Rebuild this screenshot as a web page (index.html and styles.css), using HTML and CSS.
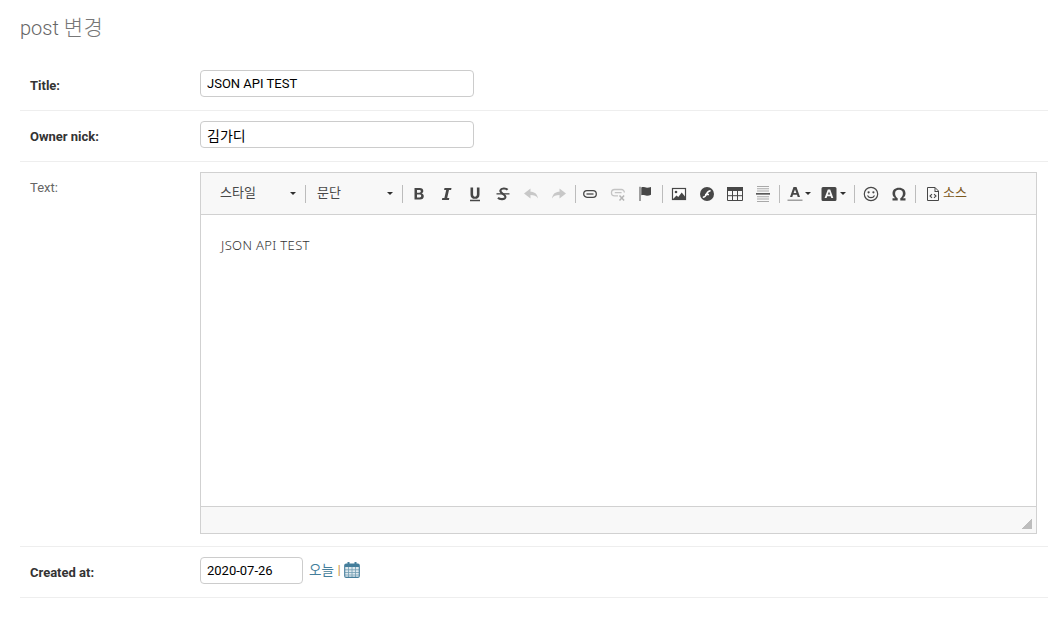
FILE: index.html
```html
<!DOCTYPE html>
<html lang="ko">
<head>
<meta charset="utf-8">
<title>post 변경</title>
<link rel="stylesheet" href="styles.css">
</head>
<body>
<main class="content">
  <h1 class="title">post <span class="title-ko">변경</span></h1>
  <form class="form">
    <div class="row">
      <label class="label required">Title:</label>
      <input class="input" type="text" value="JSON API TEST">
    </div>
    <div class="row">
      <label class="label required">Owner nick:</label>
      <input class="input input-ko" type="text" value="김가디">
    </div>
    <div class="row row-editor">
      <label class="label">Text:</label>
      <div class="editor">
        <div class="toolbar">
          <div class="combo combo-style"><span class="combo-label">스타일</span><i class="caret"></i></div>
          <span class="sep"></span>
          <div class="combo combo-format"><span class="combo-label">문단</span><i class="caret"></i></div>
          <span class="sep"></span>
          <div class="group">
            <span class="btn"><svg width="16" height="16" viewBox="0 0 16 16"><path fill="#474747" fill-rule="evenodd" d="M3.500 2h5.200c2.300 0 3.600 1 3.600 3 0 1.200-.7 2-1.700 2.400 1.400.3 2.200 1.300 2.200 2.800 0 2-1.400 3.300-3.800 3.300H3.500V2zm2.500 2v2.700h2.300c1 0 1.500-.4 1.500-1.400 0-.9-.5-1.300-1.500-1.300H6zm0 4.600v2.900h2.600c1.100 0 1.600-.5 1.600-1.400 0-1-.6-1.500-1.600-1.500H6z"/></svg></span>
            <span class="btn"><svg width="16" height="16" viewBox="0 0 16 16"><path fill="#474747" d="M5.500 2h7l-.4 1.900h-2.100L8.200 12.100h2.100l-.4 1.900h-7l.4-1.900h2.100l1.800-8.200H5.100z"/></svg></span>
            <span class="btn"><svg width="16" height="16" viewBox="0 0 16 16"><path fill="#474747" d="M3.500 1.500h2.600v6.800c0 1.600.7 2.400 1.900 2.400s1.900-.8 1.900-2.400V1.500h2.600v6.900c0 3-1.700 4.400-4.500 4.400s-4.500-1.400-4.500-4.400zM3 13.800h10v1.400H3z"/></svg></span>
            <span class="btn"><svg width="16" height="16" viewBox="0 0 16 16"><path fill="none" stroke="#474747" stroke-width="2.100" d="M12.600 3.800C11 2 6.200 2 5.400 4.300 4.500 7.500 11 8 10.400 11.300c-.5 2.300-5.700 2.400-7.400.5"/><path fill="#474747" d="M1.500 7.200h13v1.300h-13z"/></svg></span>
            <span class="btn"><svg width="16" height="16" viewBox="0 0 16 16"><path fill="#c8c8c8" d="M7.500 2.500v3.300c4 0 6.800 2 7.500 6.700-1.600-2.500-4-3.400-7.500-3.400v3.400L1 7.500z"/></svg></span>
            <span class="btn"><svg width="16" height="16" viewBox="0 0 16 16"><path fill="#c8c8c8" d="M8.500 2.500v3.300c-4 0-6.800 2-7.500 6.700 1.600-2.500 4-3.400 7.500-3.400v3.400L15 7.500z"/></svg></span>
          </div>
          <span class="sep sep-tight"></span>
          <div class="group">
            <span class="btn"><svg width="16" height="16" viewBox="0 0 16 16"><rect x="1.700" y="4.700" width="12.600" height="6.600" rx="3.300" fill="none" stroke="#474747" stroke-width="1.300"/><path stroke="#474747" stroke-width="1.300" d="M4.500 8h7"/></svg></span>
            <span class="btn"><svg width="16" height="16" viewBox="0 0 16 16"><path fill="none" stroke="#c4c4c4" stroke-width="1.300" d="M8 9.800H4.600a3 3 0 0 1 0-6.300h6.800a3 3 0 0 1 3 3M4.800 6.700h6.800"/><path fill="none" stroke="#b5b5b5" stroke-width="1.500" d="M9.500 9.500l4.600 5m0-5l-4.600 5"/></svg></span>
            <span class="btn"><svg width="16" height="16" viewBox="0 0 16 16"><path fill="#474747" d="M1.500 .8h1V15h-1zM3.300 1.400c2-.9 4 .4 5.700.4 1.400 0 2.700-.3 4-.8v7.800c-1.300.6-2.600.9-4 .9-1.700 0-3.700-1.200-5.700-.5z"/></svg></span>
          </div>
          <span class="sep"></span>
          <div class="group">
            <span class="btn"><svg width="16" height="16" viewBox="0 0 16 16"><rect x="1.500" y="2.500" width="13" height="11" fill="#fff" stroke="#474747" stroke-width="1.200"/><circle cx="5" cy="6" r="1.300" fill="#474747"/><path fill="#474747" d="M2 13l3.500-3.500 1.800 1.500 3.400-4.500 3.300 4v3H2z"/></svg></span>
            <span class="btn"><svg width="16" height="16" viewBox="0 0 16 16"><circle cx="8" cy="8" r="7" fill="#474747"/><path fill="none" stroke="#fff" stroke-width="1.600" d="M3.800 11.200c2.200 0 3-1.200 3.800-3.200s1.700-3.200 4-3.200M6 8.500h4"/></svg></span>
            <span class="btn"><svg width="16" height="16" viewBox="0 0 16 16"><path fill="#474747" d="M0 1h16v4H0z"/><path fill="none" stroke="#474747" d="M.5 1.500h15v13H.5zM5.500 5v9.500M10.500 5v9.500M.5 9.700h15"/></svg></span>
            <span class="btn"><svg width="16" height="16" viewBox="0 0 16 16"><path fill="#a9a9a9" d="M2 0h12v1H2zM2 2.300h12v1H2zM2 4.600h12v1H2zM2 10.300h12v1H2zM2 12.600h12v1H2zM2 14.900h12v1H2z"/><path fill="#474747" d="M1 7.100h14v1.500H1z"/></svg></span>
          </div>
          <span class="sep"></span>
          <div class="group">
            <span class="btn btn-menu"><svg width="16" height="16" viewBox="0 0 16 16"><path fill="#474747" fill-rule="evenodd" d="M6.500 1h3l3.500 10h-2.300l-.7-2.300H6L5.300 11H3zM8 3.500L6.600 7h2.800z"/><path fill="#a0a0a0" d="M.5 13.500h15V15H.5z"/></svg><i class="caret caret-small"></i></span>
            <span class="btn btn-menu"><svg width="16" height="16" viewBox="0 0 16 16"><path fill="#474747" fill-rule="evenodd" d="M2 1h12a1.500 1.500 0 0 1 1.500 1.500v11A1.500 1.500 0 0 1 14 15H2a1.500 1.500 0 0 1-1.500-1.500v-11A1.500 1.500 0 0 1 2 1zM6.800 3.500L3.600 12h2l.6-1.800h3.500l.6 1.800h2L9.200 3.500zM8 5.500l1.200 3.100H6.800z"/></svg><i class="caret caret-small"></i></span>
          </div>
          <span class="sep"></span>
          <div class="group">
            <span class="btn"><svg width="16" height="16" viewBox="0 0 16 16"><circle cx="8" cy="8" r="6.700" fill="none" stroke="#474747" stroke-width="1.200"/><circle cx="5.600" cy="6.300" r="1.100" fill="#474747"/><circle cx="10.400" cy="6.300" r="1.100" fill="#474747"/><path fill="none" stroke="#474747" stroke-width="1.200" d="M4.500 9.500c.8 1.600 2 2.200 3.500 2.200s2.700-.6 3.500-2.200"/></svg></span>
            <span class="btn"><svg width="16" height="16" viewBox="0 0 16 16"><path fill="#474747" d="M1.500 14.500v-2.200h2.700C2.600 11 1.500 9.300 1.500 7.400c0-3.500 2.500-5.700 6.500-5.700s6.500 2.200 6.500 5.700c0 1.900-1.100 3.600-2.700 4.900h2.700v2.200H9.300v-2.200c1.500-1 2.600-2.800 2.600-4.800 0-2.400-1.400-3.700-3.900-3.700S4.100 5.100 4.100 7.500c0 2 1.100 3.800 2.600 4.800v2.200z"/></svg></span>
          </div>
          <span class="sep"></span>
          <div class="source">
            <svg width="14" height="16" viewBox="0 0 14 16"><path fill="none" stroke="#474747" d="M1.500 1.500h7.500l3.500 3.500v9.500h-11z"/><path fill="#474747" d="M8.500 1.500h1V5h3v1h-4z"/><path fill="none" stroke="#474747" stroke-width="1.100" d="M6 8.200L4 10l2 1.800M8 8.200l2 1.800-2 1.800"/></svg>
            <span class="source-label">소스</span>
          </div>
        </div>
        <div class="editable">
          <p class="editable-text">JSON API TEST</p>
        </div>
        <div class="statusbar">
          <i class="grip"></i>
        </div>
      </div>
    </div>
    <div class="row row-date">
      <label class="label required">Created at:</label>
      <input class="input input-date" type="text" value="2020-07-26">
      <span class="shortcuts"><a class="link">오늘</a><span class="pipe">|</span><svg class="cal" width="16" height="16" viewBox="0 0 16 16"><rect x=".7" y="2" width="14.600" height="13.400" rx="1.500" fill="#dfe9ee" stroke="#447e9b" stroke-width="1.100"/><path fill="#447e9b" d="M1 2h14v3H1z"/><path fill="#447e9b" d="M3.500 0h2v3h-2zM10.500 0h2v3h-2z"/><path stroke="#447e9b" stroke-width=".8" opacity=".7" d="M1 7.800h14M1 10.500h14M1 13h14M4.500 5v10M8 5v10M11.500 5v10"/></svg></span>
    </div>
  </form>
</main>
</body>
</html>
```

FILE: styles.css
```css
* { box-sizing: border-box; }
html, body { margin: 0; padding: 0; }
body {
  background: #fff;
  color: #333;
  font-family: Roboto, "Noto Sans CJK KR", sans-serif;
  font-size: 14px;
  overflow: hidden;
}
.content { padding: 0 0 0 20px; }
.title {
  margin: 0;
  padding-top: 14px;
  height: 60px;
  font-size: 20px;
  line-height: 28px;
  font-weight: 300;
  color: #666;
}
.title-ko { font-size: 21px; letter-spacing: .5px; color: #777; }
.row {
  display: flex;
  align-items: flex-start;
  padding: 10px 0 12px 10px;
  border-bottom: 1px solid #eee;
  min-height: 51px;
}
.label {
  flex: 0 0 170px;
  width: 170px;
  font-size: 13px;
  line-height: 16px;
  padding-top: 8px;
  color: #666;
}
.required { font-weight: 700; color: #333; }
.input {
  width: 274px;
  height: 27px;
  padding: 0 6px;
  border: 1px solid #ccc;
  border-radius: 4px;
  background: #fff;
  font-family: Roboto, "Noto Sans CJK KR", sans-serif;
  font-size: 13px;
  color: #000;
  outline: none;
}
.input-ko { font-size: 14px; }
.input-date { width: 103px; }
.row-editor { padding-bottom: 12px; }
.row-editor .label { font-weight: 400; }
.editor {
  width: 837px;
  height: 362px;
  border: 1px solid #d1d1d1;
  display: flex;
  flex-direction: column;
}
.toolbar {
  height: 42px;
  flex: none;
  background: #f8f8f8;
  border-bottom: 1px solid #d1d1d1;
  display: flex;
  align-items: center;
  color: #484848;
}
.combo {
  height: 24px;
  display: flex;
  align-items: center;
  font-family: "Noto Sans CJK KR", sans-serif;
  font-size: 13px;
}
.combo-label { padding-bottom: 5px; }
.combo-style { width: 104px; padding-left: 19px; }
.combo-format { width: 96px; padding-left: 11px; }
.caret {
  display: block;
  width: 0;
  height: 0;
  border: 3px solid transparent;
  border-top-color: #2f2f2f;
  border-bottom-width: 0;
  margin-left: auto;
  margin-right: 9px;
}
.caret-small { margin: 0 0 0 1px; }
.sep {
  flex: none;
  width: 1px;
  height: 18px;
  background: #bcbcbc;
}
.combo + .sep + .group,
.group + .sep + .group { margin-left: 2px; }
.group + .sep { margin-left: 2px; }
.group + .sep.sep-tight + .group { margin-left: 0; }
.group { display: flex; align-items: center; }
.btn {
  width: 28px;
  height: 24px;
  display: flex;
  align-items: center;
  justify-content: center;
}
.btn-menu { width: 37px; gap: 2px; }
.btn-menu:first-child { width: 33px; padding-left: 1px; gap: 1px; }
.source {
  display: flex;
  align-items: center;
  gap: 3px;
  margin-left: 10px;
  font-family: "Noto Sans CJK KR", sans-serif;
  font-size: 13px;
}
.source-label { color: #7d5a1e; padding-bottom: 5px; }
.editable {
  flex: 1;
  background: #fff;
  padding: 20px 20px;
}
.editable-text {
  margin: 0;
  font-family: "Noto Sans", sans-serif;
  font-size: 13px;
  font-weight: 300;
  letter-spacing: .35px;
  line-height: 20px;
  color: #333;
}
.statusbar {
  flex: none;
  height: 27px;
  background: #f8f8f8;
  border-top: 1px solid #d1d1d1;
  position: relative;
}
.grip {
  position: absolute;
  right: 4px;
  bottom: 4px;
  width: 10px;
  height: 10px;
  background: linear-gradient(135deg, transparent 50%, #bdbdbd 50%);
}
.shortcuts {
  display: flex;
  align-items: center;
  height: 25px;
  margin-left: 6px;
  font-size: 13px;
  color: #447e9b;
}
.link { color: #447e9b; font-family: "Noto Sans CJK KR", sans-serif; font-size: 13.500px; padding-bottom: 2px; }
.pipe { color: #c68a2e; margin: 0 3px 0 4px; font-size: 12px; }
.cal { display: block; }
```
